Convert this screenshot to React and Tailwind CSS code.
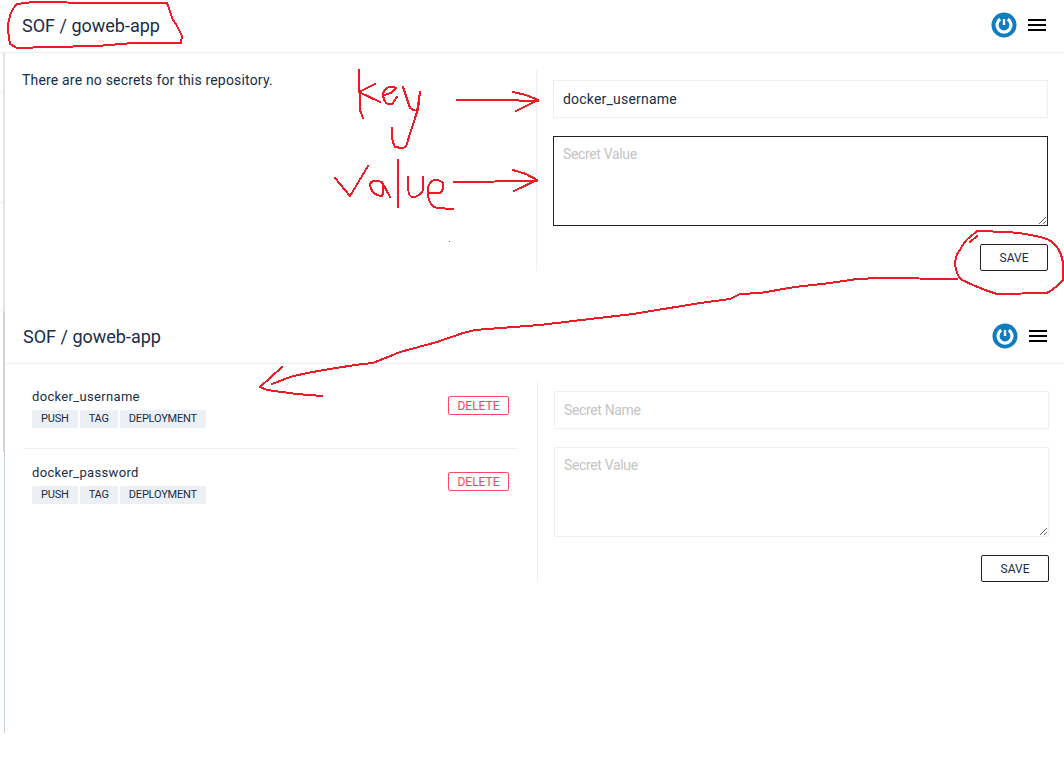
import React from 'react';

const Header = ({ className = '' }) => (
  <header className={`flex h-[53px] items-center justify-between border-b border-[#eceff3] pb-[2px] pr-[18px] ${className}`}>
    <h1 className="text-[18px] font-normal text-[#192d46]">SOF / goweb-app</h1>
    <div className="flex items-center gap-[11px]">
      <svg width="26" height="26" viewBox="0 0 26 26" aria-hidden="true">
        <circle cx="13" cy="13" r="12.5" fill="#0f7dbd" />
        <path d="M9.2 7.2 A7 7 0 1 0 16.8 7.2" fill="none" stroke="#fff" strokeWidth="3.2" />
        <path d="M13 7v6" stroke="#fff" strokeWidth="2.4" />
      </svg>
      <div className="flex w-[18px] flex-col gap-[3px]">
        <span className="h-[2px] bg-black" />
        <span className="h-[2px] bg-black" />
        <span className="h-[2px] bg-black" />
      </div>
    </div>
  </header>
);

const SecretForm = ({ name, active }) => (
  <div className="flex w-[512px] shrink-0 flex-col border-l border-[#eceff3] pl-4 pt-[10px]">
    <input
      defaultValue={name}
      placeholder="Secret Name"
      className="h-[38px] w-full border border-[#eceff3] px-[9px] text-sm tracking-[0.2px] text-[#192d46] outline-none placeholder:tracking-[-0.35px] placeholder:text-[#c4c4c4]"
    />
    <textarea
      placeholder="Secret Value"
      className={`mt-[18px] h-[90px] w-full border px-[9px] py-[7px] text-sm outline-none placeholder:tracking-[-0.35px] placeholder:text-[#c4c4c4] ${
        active ? 'border-[#222222]' : 'border-[#eceff3]'
      }`}
    />
    <div className="mt-[18px] flex justify-end">
      <button className="h-[27px] w-[68px] rounded-[2px] border border-[#222222] text-xs text-[#192d46]">
        SAVE
      </button>
    </div>
  </div>
);

const Secret = ({ name }) => (
  <div className="flex items-start justify-between border-b border-[#eceff3] pb-5 pl-[9px] pr-[9px] pt-[15px] first:pt-[7px] last:border-b-0">
    <div>
      <div className="h-[17px] pt-px text-[13px] leading-4 tracking-[0.33px] text-[#192d46]">{name}</div>
      <div className="mt-[5px] flex gap-[2px]">
        {['PUSH', 'TAG', 'DEPLOYMENT'].map((event) => (
          <span
            key={event}
            className="flex h-[18px] items-center rounded-[2px] bg-[#eceff3] px-[9px] text-[11px] tracking-[-0.2px] text-[#192d46]"
          >
            {event}
          </span>
        ))}
      </div>
    </div>
    <button className="mt-2 h-[19px] w-[61px] rounded-[2px] border border-[#ff4a60] text-xs text-[#ff4164]">
      DELETE
    </button>
  </div>
);

const Panel = ({ className, headerClass, children, form }) => (
  <section className={`w-[1064px] ${className}`}>
    <Header className={headerClass} />
    <div className="flex pl-[22px] pr-4 pt-[17px]">
      <div className="min-w-0 flex-1">{children}</div>
      {form}
    </div>
  </section>
);

// hand drawn red marks on top of the page
const Scribbles = () => (
  <svg
    className="pointer-events-none absolute left-0 top-0"
    width="1064"
    height="770"
    fill="none"
    stroke="#ed1c24"
    strokeWidth="2"
    strokeLinejoin="round"
    strokeLinecap="round"
    shapeRendering="crispEdges"
    aria-hidden="true"
  >
    {/* title outline */}
    <path d="M33 2 L100 3 L167 3 L170 11 L172 18 L177 26 L182 36 L181 43 L133 43 L97 46 L50 47 L17 48 L10 44 L8 30 Q8 12 17 4 Z" />
    {/* key */}
    <path d="M359 70 L360 110 L363 118 M375 84 L359 92 L380 102" />
    <path d="M384 95 Q392 94 396 88 Q386 84 383 94 Q384 106 392 104 L397 97" />
    <path d="M403 87 L410 108 Q416 112 418 110 L420 92 L417 112 L408 140 Q407 148 402 148 L395 147 Q391 140 392 128" />
    <path d="M457 100 L500 100 L538 101 M513 92 L526 95 L538 100 L516 111" />
    {/* value */}
    <path d="M335 178 L350 196 L368 166" />
    <path d="M382 182 Q370 178 370 186 Q373 196 382 196 Q385 190 382 182 L390 197" />
    <path d="M398 160 L398 207" />
    <path d="M408 177 Q407 196 412 197 Q420 197 423 190 L423 177" />
    <path d="M428 193 L440 193 Q444 190 443 183 Q438 178 432 181 Q427 184 428 195 Q429 206 437 208 L453 209" />
    <path d="M454 182 L537 181 M513 170 L526 174 L537 180 L514 191" />
    {/* ring round save */}
    <path d="M977 231 L1008 232 L1026 234 L1040 237 Q1049 239 1053 243 Q1063 252 1063 266 L1063 280 Q1056 288 1047 293 L997 294 L985 290 L973 285 L962 280 Q956 276 955 263 Q956 254 960 250 Q965 240 970 237 Z M970 242 L977 236" />
    {/* long arrow */}
    <path d="M957 279 L880 278 L857 279 L830 283 L795 287 L760 293 L740 294 L730 299 L700 303 L633 314 L573 321 L540 325 L475 330 L463 333 L437 342 L400 352 L373 363 L355 365 L330 369 L307 373 L290 377 L272 384" />
    <path d="M282 367 L260 387 L267 390 L297 394 L322 396" />
  </svg>
);

export default function App() {
  return (
    <div className="relative h-[770px] w-[1064px] overflow-hidden bg-white font-['Roboto',sans-serif]">
      <Panel className="h-[311px]" headerClass="pl-[22px]" form={<SecretForm name="docker_username" active />}>
        <p className="pt-[2px] text-sm leading-4 tracking-[0.18px] text-[#192d46]">There are no secrets for this repository.</p>
      </Panel>
      <Panel className="ml-px" headerClass="ml-[4px] pl-[18px]" form={<SecretForm />}>
        <div className="w-[495px]">
          <Secret name="docker_username" />
          <Secret name="docker_password" />
        </div>
      </Panel>
      {/* edge of the sidebar left in the screenshot */}
      <div className="absolute left-[3px] top-[53px] h-[259px] w-[2px] bg-[#dfe2e6]" />
      <div className="absolute left-[3px] top-[312px] h-[140px] w-[2px] bg-[#cdd3da]" />
      <div className="absolute left-[4px] top-[452px] h-[281px] w-px bg-[#c5d0de]" />
      <div className="absolute left-0 top-[92px] h-px w-[3px] bg-[#eceff3]" />
      <div className="absolute left-0 top-[202px] h-px w-[3px] bg-[#eceff3]" />
      <div className="absolute left-0 top-[310px] h-px w-[3px] bg-[#eceff3]" />
      <div className="absolute left-[449px] top-[241px] h-px w-px bg-[#555555]" />
      <Scribbles />
    </div>
  );
}
